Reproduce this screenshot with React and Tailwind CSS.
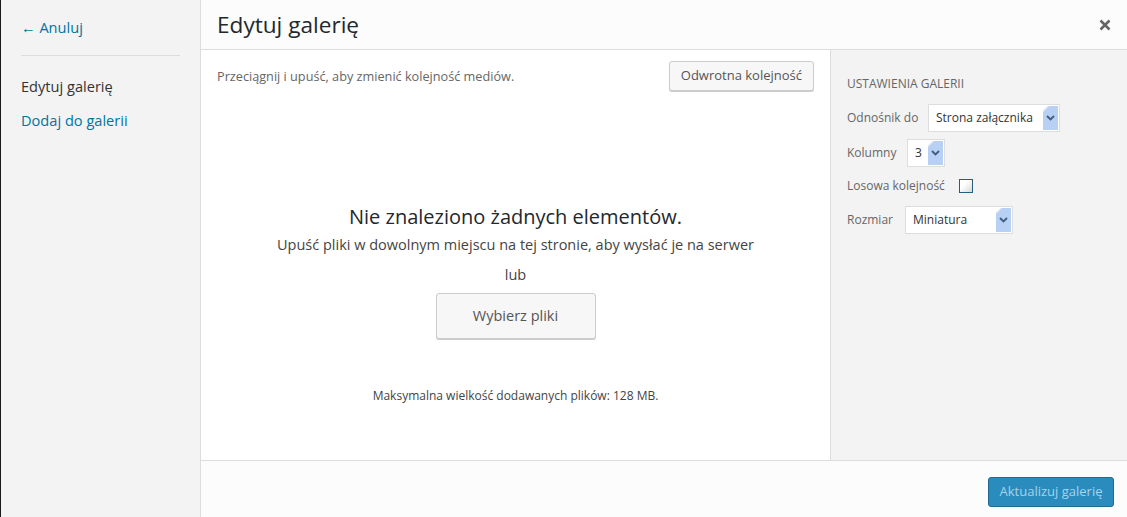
import React from "react";

function Chevron() {
  return (
    <svg width="9" height="6" viewBox="0 0 9 6" className="block">
      <path d="M1 1 L4.5 4.5 L8 1" fill="none" stroke="#3f5c82" strokeWidth="1.8" />
    </svg>
  );
}

function FakeSelect({ value, width }) {
  return (
    <div className={`flex h-[28px] border border-[#dddddd] bg-white p-px ${width}`}>
      <span className="flex-1 pl-[6px] text-[12px] leading-[24px] text-[#333]">{value}</span>
      <span className="relative flex w-[15px] items-center justify-center bg-[#b7d0f3]">
        <span className="absolute left-0 top-0 h-[6px] w-[6px] bg-[linear-gradient(135deg,#ffffff_0%,#ffffff_30%,transparent_60%)]" />
        <Chevron />
      </span>
    </div>
  );
}

export default function App() {
  return (
    <div className="flex h-[517px] w-[1127px] overflow-hidden bg-white font-['Open_Sans',sans-serif]">
      <div className="w-px bg-[#1a1a1a]" />
      <aside className="flex w-[200px] flex-col border-r border-[#dddddd] bg-[#f3f3f3] px-[20px] pt-[17px]">
        <a className="text-[14.6px] leading-[20px] text-[#0074a2]">← Anuluj</a>
        <div className="mt-[18px] h-px bg-[#dddddd]" />
        <div className="mt-[20px] text-[14.6px] leading-[20px] text-[#333]">Edytuj galerię</div>
        <a className="mt-[14px] text-[14.6px] leading-[20px] text-[#0074a2]">Dodaj do galerii</a>
      </aside>
      <div className="flex min-w-0 flex-1 flex-col">
        <header className="flex h-[50px] items-center justify-between border-b border-[#dddddd] bg-[#fcfcfc] pl-4 pr-4">
          <h1 className="text-[22.6px] leading-[50px] text-[#23282d]">Edytuj galerię</h1>
          <svg width="12" height="12" viewBox="0 0 12 12">
            <path d="M1.5 1.5 L10.5 10.5 M10.5 1.5 L1.5 10.5" stroke="#666" strokeWidth="2.6" />
          </svg>
        </header>
        <div className="flex min-h-0 flex-1">
          <main className="flex flex-1 flex-col bg-white">
            <div className="flex items-center justify-between px-4 pt-[11px]">
              <span className="text-[12.7px] leading-[20px] text-[#666]">Przeciągnij i upuść, aby zmienić kolejność mediów.</span>
              <button className="h-[30px] rounded-[3px] border border-[#cccccc] bg-[#f7f7f7] px-[11px] text-[13px] text-[#555] shadow-[0_1px_0_#ccc]">
                Odwrotna kolejność
              </button>
            </div>
            <div className="mt-[112px] flex flex-col items-center">
              <h2 className="text-[20px] leading-[28px] text-[#23282d]">Nie znaleziono żadnych elementów.</h2>
              <p className="mt-[4px] text-[14.5px] leading-[20px] text-[#444]">
                Upuść pliki w dowolnym miejscu na tej stronie, aby wysłać je na serwer
              </p>
              <p className="mt-[10px] text-[14.5px] leading-[20px] text-[#444]">lub</p>
              <button className="mt-[8px] h-[46px] w-[160px] rounded-[3px] border border-[#cccccc] bg-[#f7f7f7] text-[14.5px] text-[#555] shadow-[0_1px_0_#ccc]">
                Wybierz pliki
              </button>
              <p className="mt-[48px] text-[12px] leading-[18px] text-[#444]">
                Maksymalna wielkość dodawanych plików: 128 MB.
              </p>
            </div>
          </main>
          <aside className="flex w-[297px] flex-col border-l border-[#dddddd] bg-[#f3f3f3] px-4">
            <h3 className="mt-[26px] text-[12px] uppercase leading-[16px] text-[#666]">Ustawienia galerii</h3>
            <div className="mt-[12px] flex items-center">
              <span className="w-[81px] text-[12px] text-[#666]">Odnośnik do</span>
              <FakeSelect value="Strona załącznika" width="w-[132px]" />
            </div>
            <div className="mt-[7px] flex items-center">
              <span className="w-[60px] text-[12px] text-[#666]">Kolumny</span>
              <FakeSelect value="3" width="w-[38px]" />
            </div>
            <div className="mt-[10px] flex h-[18px] items-center">
              <span className="w-[112px] text-[12px] text-[#666]">Losowa kolejność</span>
              <span className="h-[14px] w-[14px] border border-[#265e80] bg-[linear-gradient(135deg,#ffffff_0%,#ffffff_35%,#d9d9d9_100%)]" />
            </div>
            <div className="mt-[11px] flex items-center">
              <span className="w-[58px] text-[12px] text-[#666]">Rozmiar</span>
              <FakeSelect value="Miniatura" width="w-[108px]" />
            </div>
          </aside>
        </div>
        <footer className="flex h-[57px] items-start justify-end border-t border-[#dddddd] bg-[#fcfcfc] pr-[13px] pt-[16px]">
          <button className="h-[30px] w-[126px] rounded-[3px] border border-[#1e6a93] bg-[#2a8bbd] text-[13px] text-[#a6d3ea]">
            Aktualizuj galerię
          </button>
        </footer>
      </div>
    </div>
  );
}
